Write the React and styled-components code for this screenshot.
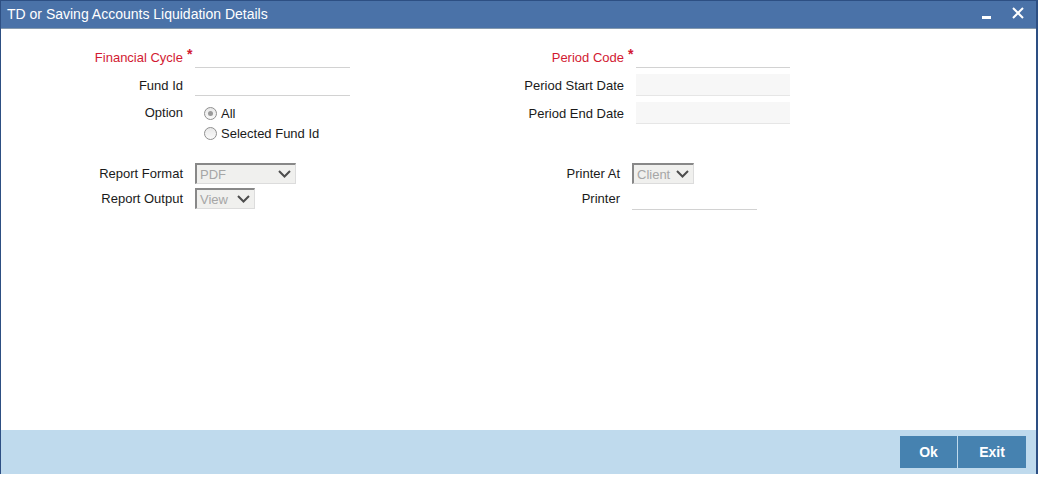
import React from "react";
import styled, { createGlobalStyle } from "styled-components";

const Global = createGlobalStyle`
  html, body { margin: 0; padding: 0; background: #ffffff; }
  body { font-family: "Liberation Sans", Arial, sans-serif; font-size: 13px; color: #1a1a1a; }
  * { box-sizing: border-box; }
`;

const Window = styled.div`
  width: 1038px;
  height: 474px;
  display: flex;
  flex-direction: column;
  border-left: 1px solid #2d4f83;
  border-right: 2px solid #2d4f83;
  border-top: 1px solid #2d4f83;
  background: #ffffff;
`;

const TitleBar = styled.div`
  height: 28px;
  flex: none;
  display: flex;
  align-items: center;
  justify-content: space-between;
  background: #4a72a8;
  border-bottom: 1px solid #8499ae;
  padding: 0 0 1px 6px;
`;

const Title = styled.div`
  color: #ffffff;
  font-size: 14px;
  line-height: 16px;
`;

const WinControls = styled.div`
  display: flex;
  align-items: center;
  gap: 21px;
  padding-right: 12px;
  height: 100%;
  padding-bottom: 3px;
`;

const IconBtn = styled.span`
  display: flex;
  width: ${(p) => p.$w}px;
  height: 12px;
  align-items: ${(p) => (p.$dash ? "flex-end" : "center")};
`;

const Body = styled.div`
  flex: 1;
  padding-top: 14px;
  display: flex;
  flex-direction: column;
`;

const Section = styled.div`
  display: flex;
  align-items: flex-start;
  margin-top: ${(p) => p.$mt || 0}px;
`;

const Group = styled.div`
  display: grid;
  grid-template-columns: ${(p) => p.$label}px 12px ${(p) => p.$field}px;
  grid-auto-rows: minmax(${(p) => p.$row}px, auto);
  align-items: center;
  width: ${(p) => p.$width}px;
  align-content: start;
`;

const Label = styled.div`
  text-align: right;
  color: ${(p) => (p.$req ? "#d21a32" : "#1a1a1a")};
  white-space: nowrap;
  align-self: ${(p) => (p.$top ? "start" : "center")};
  line-height: ${(p) => (p.$top ? "20px" : "normal")};
  padding-top: ${(p) => (p.$top ? "4px" : "0")};
`;

const Star = styled.div`
  color: #d21a32;
  font-size: 14px;
  font-weight: bold;
  padding-left: 4px;
  align-self: start;
  padding-top: ${(p) => p.$pt || 3}px;
`;

const Gap = styled.div``;

const TextField = styled.div`
  height: 22px;
  width: ${(p) => p.$w || "100%"};
  border-bottom: 1px solid ${(p) => (p.$ro ? "#e6e6e6" : "#d2d2d2")};
  background: ${(p) => (p.$ro ? "#f7f7f7" : "transparent")};
`;

const RadioGroup = styled.div`
  align-self: start;
  padding-top: 4px;
  padding-left: 9px;
  display: flex;
  flex-direction: column;
`;

const RadioLine = styled.label`
  display: flex;
  align-items: center;
  height: 20px;
  gap: 4px;
  white-space: nowrap;
`;

const RadioDot = styled.span`
  width: 13px;
  height: 13px;
  border-radius: 50%;
  border: 1px solid #8f8f8f;
  background: linear-gradient(#e8e8e8, #fafafa);
  display: flex;
  align-items: center;
  justify-content: center;
  &::after {
    content: "";
    width: 5px;
    height: 5px;
    border-radius: 50%;
    background: ${(p) => (p.$on ? "#9a9a9a" : "transparent")};
  }
`;

const SelectBox = styled.div`
  width: ${(p) => p.$w}px;
  height: 21px;
  display: flex;
  align-items: center;
  justify-content: space-between;
  background: #f0f0ee;
  border-top: 2px solid #888888;
  border-left: 2px solid #888888;
  border-right: 1px solid #dcdcdc;
  border-bottom: 1px solid #dcdcdc;
  padding: 0 4px 0 3px;
  color: #a6a6a6;
  font-size: 13px;
`;

const Footer = styled.div`
  height: 44px;
  flex: none;
  background: #bfdaed;
  display: flex;
  justify-content: flex-end;
  align-items: center;
  gap: 1px;
  padding-right: 10px;
`;

const Button = styled.button`
  height: 32px;
  width: ${(p) => p.$w}px;
  border: none;
  background: #4682b0;
  color: #ffffff;
  font-family: "Liberation Sans", Arial, sans-serif;
  font-weight: bold;
  font-size: 14px;
  padding: 0;
`;

const Chevron = () => (
  <svg width="13" height="8" viewBox="0 0 13 8">
    <path d="M1 1 L6.5 6.5 L12 1" fill="none" stroke="#4d4d4d" strokeWidth="2" />
  </svg>
);

const Select = ({ w, value }) => (
  <SelectBox $w={w}>
    <span>{value}</span>
    <Chevron />
  </SelectBox>
);

export default function App() {
  return (
    <>
      <Global />
      <Window>
        <TitleBar>
          <Title>TD or Saving Accounts Liquidation Details</Title>
          <WinControls>
            <IconBtn $w={9} $dash>
              <svg width="9" height="3" viewBox="0 0 9 3">
                <rect x="0" y="0" width="9" height="3" fill="#ffffff" />
              </svg>
            </IconBtn>
            <IconBtn $w={12}>
              <svg width="12" height="12" viewBox="0 0 12 12">
                <path d="M1 1 L11 11 M11 1 L1 11" stroke="#ffffff" strokeWidth="2" />
              </svg>
            </IconBtn>
          </WinControls>
        </TitleBar>
        <Body>
          <Section>
            <Group $label={182} $field={155} $row={28} $width={349}>
              <Label $req>Financial Cycle</Label>
              <Star>*</Star>
              <TextField />
              <Label>Fund Id</Label>
              <Gap />
              <TextField />
              <Label $top>Option</Label>
              <Gap />
              <RadioGroup>
                <RadioLine>
                  <RadioDot $on />
                  All
                </RadioLine>
                <RadioLine>
                  <RadioDot />
                  Selected Fund Id
                </RadioLine>
              </RadioGroup>
            </Group>
            <Group $label={274} $field={154} $row={28} $width={440}>
              <Label $req>Period Code</Label>
              <Star>*</Star>
              <TextField />
              <Label>Period Start Date</Label>
              <Gap />
              <TextField $ro />
              <Label>Period End Date</Label>
              <Gap />
              <TextField $ro />
            </Group>
          </Section>
          <Section $mt={18}>
            <Group $label={182} $field={155} $row={25} $width={349}>
              <Label>Report Format</Label>
              <Gap />
              <Select w={101} value="PDF" />
              <Label>Report Output</Label>
              <Gap />
              <Select w={60} value="View" />
            </Group>
            <Group $label={270} $field={160} $row={25} $width={440}>
              <Label>Printer At</Label>
              <Gap />
              <Select w={62} value="Client" />
              <Label>Printer</Label>
              <Gap />
              <TextField $w="125px" />
            </Group>
          </Section>
        </Body>
        <Footer>
          <Button $w={57}>Ok</Button>
          <Button $w={68}>Exit</Button>
        </Footer>
      </Window>
    </>
  );
}
